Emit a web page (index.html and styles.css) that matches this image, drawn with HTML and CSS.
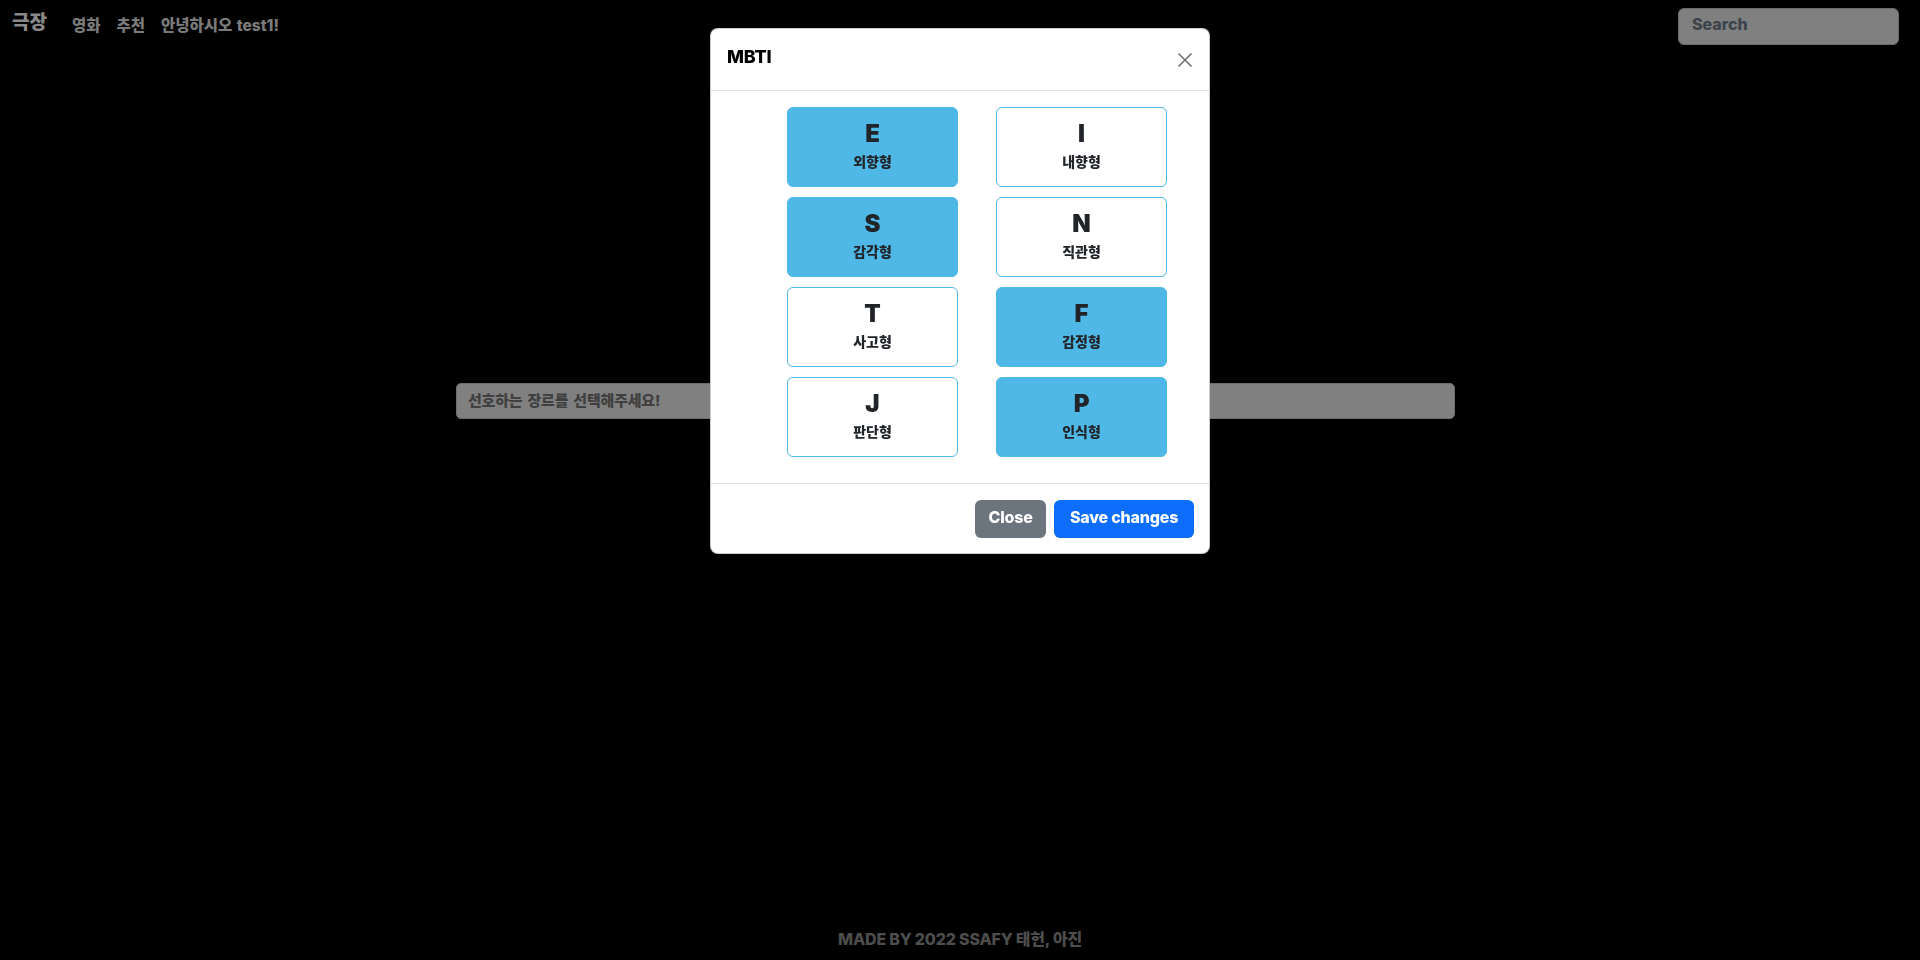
FILE: index.html
```html
<!DOCTYPE html>
<html lang="ko">
<head>
<meta charset="utf-8">
<title>극장</title>
<link rel="stylesheet" href="styles.css">
</head>
<body>
<nav class="topbar">
  <a class="brand">극장</a>
  <ul class="nav-links">
    <li>영화</li>
    <li>추천</li>
    <li>안녕하시오 test1!</li>
  </ul>
  <div class="search">Search</div>
</nav>

<main class="main">
  <div class="genre-bar">선호하는 장르를 선택해주세요!</div>
</main>

<footer class="site-footer">MADE BY 2022 SSAFY 태헌, 아진</footer>

<div class="modal-layer">
  <div class="modal">
    <div class="modal-header">
      <h5 class="modal-title">MBTI</h5>
      <button class="btn-close" aria-label="Close">
        <svg width="16" height="16" viewBox="0 0 16 16"><path d="M1.5 1.5 L14.5 14.5 M14.5 1.5 L1.5 14.5" stroke="#6f6f6f" stroke-width="1.6" fill="none"/></svg>
      </button>
    </div>
    <div class="modal-body">
      <div class="mbti-box on"><span class="letter">E</span><span class="label">외향형</span></div>
      <div class="mbti-box"><span class="letter">I</span><span class="label">내향형</span></div>
      <div class="mbti-box on"><span class="letter">S</span><span class="label">감각형</span></div>
      <div class="mbti-box"><span class="letter">N</span><span class="label">직관형</span></div>
      <div class="mbti-box"><span class="letter">T</span><span class="label">사고형</span></div>
      <div class="mbti-box on"><span class="letter">F</span><span class="label">감정형</span></div>
      <div class="mbti-box"><span class="letter">J</span><span class="label">판단형</span></div>
      <div class="mbti-box on"><span class="letter">P</span><span class="label">인식형</span></div>
    </div>
    <div class="modal-footer">
      <button class="btn btn-gray">Close</button>
      <button class="btn btn-blue">Save changes</button>
    </div>
  </div>
</div>
</body>
</html>
```

FILE: styles.css
```css
* { box-sizing: border-box; }

html, body {
  margin: 0;
  padding: 0;
}

body {
  background: #000;
  font-family: Inter, "Noto Sans CJK KR", sans-serif;
  font-weight: 800;
  min-height: 100vh;
  display: flex;
  flex-direction: column;
}

.topbar {
  display: flex;
  align-items: center;
  padding: 8px 21px 0 12px;
  height: 45px;
}

.brand {
  font-size: 19px;
  color: #8a8a8a;
  margin-right: 25px;
  line-height: 1;
  padding-bottom: 9px;
}

.nav-links {
  display: flex;
  gap: 16px;
  list-style: none;
  margin: 0;
  padding: 0 0 6px 0;
  font-size: 15.5px;
  color: #7a7a7a;
  word-spacing: 1px;
}

.search {
  margin-left: auto;
  width: 221px;
  height: 37px;
  background: #808080;
  border: 1px solid #6b6b6b;
  border-radius: 6px;
  padding: 0 13px;
  display: flex;
  align-items: center;
  color: #3d434b;
  font-size: 16px;
  padding-bottom: 5px;
}

.main {
  flex: 1;
}

.genre-bar {
  margin-top: 338px;
  margin-left: 456px;
  width: 999px;
  height: 36px;
  background: #808080;
  border: 1px solid #6e6e6e;
  border-radius: 5px;
  padding: 0 11px 4px;
  display: flex;
  align-items: center;
  color: #404040;
  font-size: 15px;
  letter-spacing: -0.2px;
  word-spacing: 2px;
}

.site-footer {
  text-align: center;
  color: #4d4d4d;
  font-size: 16px;
  line-height: 24px;
  padding-bottom: 9px;
  letter-spacing: -0.2px;
}

/* modal */
.modal-layer {
  position: fixed;
  inset: 0;
  display: flex;
  justify-content: center;
  align-items: flex-start;
}

.modal {
  width: 500px;
  margin-top: 28px;
  background: #fff;
  border: 1px solid rgba(0, 0, 0, 0.2);
  border-radius: 8px;
}

.modal-header {
  height: 62px;
  padding: 0 16px;
  display: flex;
  align-items: center;
  justify-content: space-between;
  border-bottom: 1px solid #dee2e6;
}

.modal-title {
  margin: 0;
  font-size: 18px;
  font-weight: 800;
  color: #000;
  padding-bottom: 7px;
  letter-spacing: -0.2px;
}

.btn-close {
  border: 0;
  background: transparent;
  padding: 0;
  width: 16px;
  height: 16px;
  display: flex;
}

.modal-body {
  display: grid;
  grid-template-columns: 171px 171px;
  column-gap: 38px;
  row-gap: 10px;
  padding: 16px 16px 26px 76px;
}

.mbti-box {
  height: 80px;
  border: 1px solid #4fb8e6;
  border-radius: 6px;
  background: #fff;
  display: flex;
  flex-direction: column;
  align-items: center;
  justify-content: center;
  color: #212529;
  padding-bottom: 3px;
}

.mbti-box.on {
  background: #4fb8e6;
}

.letter {
  font-size: 24px;
  line-height: 30px;
  font-weight: 900;
}

.label {
  font-family: "Noto Sans CJK KR", sans-serif;
  font-weight: 900;
  font-size: 14px;
  line-height: 24px;
}

.modal-footer {
  border-top: 1px solid #dee2e6;
  display: flex;
  justify-content: flex-end;
  gap: 8px;
  padding: 16px 15px 15px;
}

.btn {
  height: 38px;
  border: 0;
  border-radius: 6px;
  color: #fff;
  font-family: Inter, "Noto Sans CJK KR", sans-serif;
  font-weight: 800;
  font-size: 16px;
  padding: 0 13px 4px;
  letter-spacing: -0.2px;
}

.btn-gray { background: #6c757d; width: 71px; }
.btn-blue { background: #0d6efd; width: 140px; }
```
